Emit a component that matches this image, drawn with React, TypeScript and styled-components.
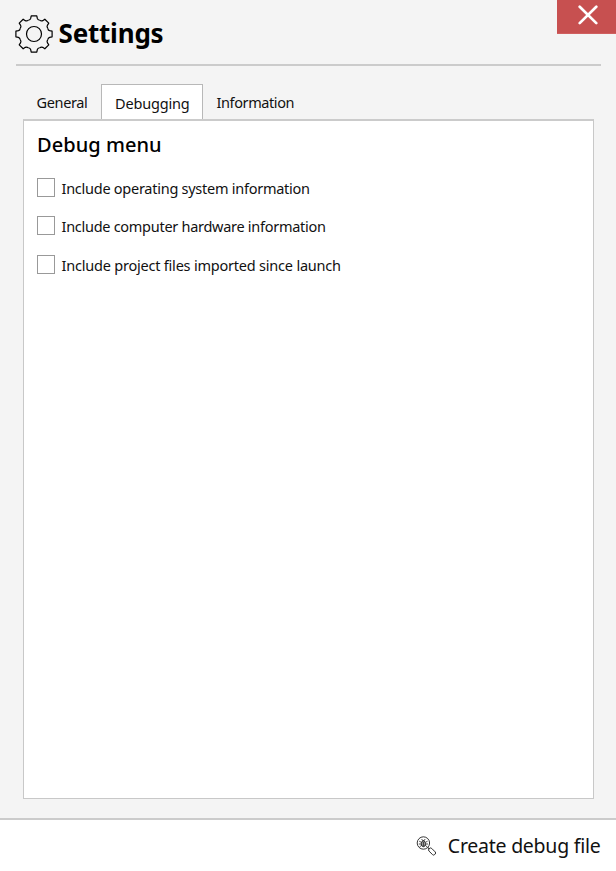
import React, { useState } from "react";
import styled, { createGlobalStyle } from "styled-components";

const GlobalStyle = createGlobalStyle`
  * { box-sizing: border-box; }
  body { margin: 0; background: #f4f4f4; }
`;

const Window = styled.div`
  display: flex;
  flex-direction: column;
  width: 616px;
  height: 871px;
  background: #f4f4f4;
  color: #000;
  font-family: "Noto Sans", "Open Sans", sans-serif;
  overflow: hidden;
`;

const Header = styled.header`
  display: flex;
  align-items: flex-start;
  height: 64px;
  padding-left: 15px;
  flex: none;
`;

const GearIcon = styled.svg`
  width: 38px;
  height: 38px;
  margin-top: 15px;
  flex: none;
`;

const Title = styled.h1`
  flex: 1;
  margin: 14px 0 0 5.5px;
  font-size: 26px;
  line-height: 38px;
  font-weight: 700;
  letter-spacing: -0.2px;
  white-space: nowrap;
`;

const CloseButton = styled.button`
  width: 59px;
  height: 34px;
  padding: 0 0 3px 3px;
  border: 0;
  border-bottom: 1px solid #d05f5f;
  background: #c75050;
  display: flex;
  align-items: center;
  justify-content: center;
`;

const Divider = styled.div`
  height: 2px;
  margin: 0 15px 0 16px;
  background: #cbcbcb;
  flex: none;
`;

const Tabs = styled.nav`
  display: flex;
  height: 35px;
  margin: 18px 23px 0;
  flex: none;
`;

const Tab = styled.button<{ $active?: boolean; $width: number; $spacing: number }>`
  width: ${(p) => p.$width}px;
  padding: ${(p) => (p.$active ? "1px 0 0 13px" : "1px 0 0 13.5px")};
  border: ${(p) => (p.$active ? "1px solid #b8b8b8" : "0")};
  border-bottom: 0;
  background: ${(p) => (p.$active ? "#fff" : "transparent")};
  color: #111;
  font: 400 14.5px/20px "Noto Sans", sans-serif;
  letter-spacing: ${(p) => p.$spacing}px;
  text-align: left;
  white-space: nowrap;
`;

const Panel = styled.main`
  flex: 1;
  margin: 0 22px 19px 23px;
  padding: 9px 13px;
  border: 1px solid #c8c8c8;
  border-top: 2px solid #cbcbcb;
  background: #fff;
`;

const PanelTitle = styled.h2`
  margin: 0;
  font-size: 20px;
  line-height: 30px;
  font-weight: 500;
  letter-spacing: 0.05px;
`;

const OptionList = styled.div`
  display: grid;
  grid-auto-rows: 38.5px;
  margin-top: 9px;
`;

const Option = styled.label<{ $spacing: number }>`
  display: flex;
  align-items: center;
  gap: 6.5px;
  font-size: 14.5px;
  font-weight: 400;
  line-height: 20px;
  letter-spacing: ${(p) => p.$spacing}px;
  color: #111;
  white-space: nowrap;
`;

const OptionText = styled.span`
  padding-bottom: 1px;
`;

const Checkbox = styled.input`
  appearance: none;
  width: 18px;
  height: 19px;
  margin: 0 0 2px;
  border: 1px solid #999;
  background: #fff;
  &:checked { background: #666; box-shadow: inset 0 0 0 3px #fff; }
`;

const Footer = styled.footer`
  display: flex;
  justify-content: flex-end;
  align-items: center;
  height: 53px;
  padding: 1px 15.5px 0 0;
  border-top: 2px solid #cbcbcb;
  background: #fff;
  flex: none;
`;

const FooterButton = styled.button`
  display: flex;
  align-items: center;
  gap: 11.5px;
  padding: 0;
  border: 0;
  background: none;
  color: #111;
  font: 400 19.5px/28px "Noto Sans", sans-serif;
  letter-spacing: -0.25px;
  white-space: nowrap;
`;

const TOOTH_ANGLES = [0, 45, 90, 135, 180, 225, 270, 315];

const Gear = () => (
  <GearIcon viewBox="-19 -19 38 38" fill="none" stroke="#000" strokeWidth="1.2" strokeLinejoin="round">
    {TOOTH_ANGLES.map((angle) => (
      <path
        key={angle}
        transform={`rotate(${angle})`}
        d="M-5.7 -13.75Q-3.7 -14.1 -3.3 -15.6L-2.8 -18.1H2.8L3.3 -15.6Q3.7 -14.1 5.7 -13.75"
      />
    ))}
    <circle r="7.5" />
  </GearIcon>
);

const BugSearch = () => (
  <svg width="20" height="20" viewBox="0 0 20 20" fill="none" stroke="#222">
    <circle cx="7.4" cy="7" r="6.2" strokeWidth="0.9" />
    <ellipse cx="7.4" cy="7.8" rx="2.1" ry="2.9" strokeWidth="0.9" fill="#aaa" />
    <path d="M5.7 3L6.5 4.5h1.8L9.1 3M3.2 5.2l2.2 1.1M11.6 5.2L9.4 6.3M2.8 8h2.5M12 8H9.5M3.5 11l2-1.6M11.3 11l-2-1.6M7.4 6v4.5" strokeWidth="0.8" />
    <path d="M11.9 11.6l1.5 1.3" strokeWidth="1.2" />
    <rect x="12.1" y="13.6" width="8" height="3.8" rx="1.6" transform="rotate(45 16.1 15.5)" strokeWidth="0.9" />
  </svg>
);

const OPTIONS = [
  { text: "Include operating system information", spacing: -0.26 },
  { text: "Include computer hardware information", spacing: -0.28 },
  { text: "Include project files imported since launch", spacing: -0.21 },
];

const TABS = [
  { text: "General", width: 78, spacing: -0.35 },
  { text: "Debugging", width: 102, spacing: -0.17 },
  { text: "Information", width: 106, spacing: -0.4 },
];

export default function App() {
  const [active, setActive] = useState("Debugging");
  return (
    <Window>
      <GlobalStyle />
      <Header>
        <Gear />
        <Title>Settings</Title>
        <CloseButton aria-label="Close">
          <svg width="20" height="20" viewBox="0 0 20 20" stroke="#fff" strokeWidth="2.7" strokeLinecap="round">
            <path d="M1.7 1.7L18.3 18.1M18.3 1.7L1.7 18.1" />
          </svg>
        </CloseButton>
      </Header>
      <Divider />
      <Tabs>
        {TABS.map((t) => (
          <Tab key={t.text} $active={t.text === active} $width={t.width} $spacing={t.spacing} onClick={() => setActive(t.text)}>
            {t.text}
          </Tab>
        ))}
      </Tabs>
      <Panel>
        <PanelTitle>Debug menu</PanelTitle>
        <OptionList>
          {OPTIONS.map((o) => (
            <Option key={o.text} $spacing={o.spacing}>
              <Checkbox type="checkbox" />
              <OptionText>{o.text}</OptionText>
            </Option>
          ))}
        </OptionList>
      </Panel>
      <Footer>
        <FooterButton>
          <BugSearch />
          Create debug file
        </FooterButton>
      </Footer>
    </Window>
  );
}
